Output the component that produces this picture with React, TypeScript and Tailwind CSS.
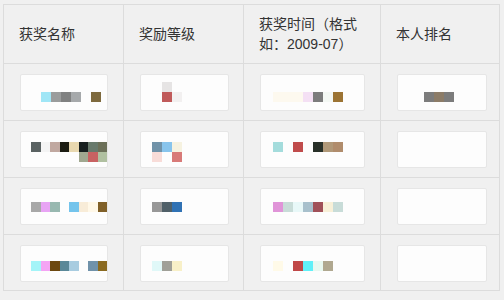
import React from 'react';

type Mosaic = { pl: string; pt: string; rows: string[][] } | null;

const COLS = ['w-[120px]', 'w-[120px]', 'w-[137px]', 'w-[119px]'];
const INPUT_W = ['w-[88px]', 'w-[89px]', 'w-[105px]', 'w-[90px]'];
const ROW_H = ['h-[57px]', 'h-[57px]', 'h-[57px]', 'h-[56px]'];

const HEADERS = ['获奖名称', '奖励等级', '获奖时间（格式如：2009-07）', '本人排名'];

// garbled (mosaic) values shown in the inputs, one block = 10px
const ROWS: Mosaic[][] = [
  [
    { pl: 'pl-[20px]', pt: 'pt-[17px]', rows: [['#a0e6f6', '#9a9c9c', '#808181', '#a6a9ab', '', '#7e6a3e']] },
    { pl: 'pl-[21px]', pt: 'pt-[7px]', rows: [['#e6e4e4'], ['#c05a5a', '#f2f0f0']] },
    { pl: 'pl-[12px]', pt: 'pt-[17px]', rows: [['#fdf9ef', '#fdf9ef', '#fdf9ef', '#f4e0f4', '#7c7c7c', '#f4f8f4', '#9c7434']] },
    { pl: 'pl-[26px]', pt: 'pt-[17px]', rows: [['#7c7c7c', '#8c7c68', '#7c7c7c']] },
  ],
  [
    {
      pl: 'pl-[10px]',
      pt: 'pt-[10px]',
      rows: [
        ['#5a6262', '#f4f4f4', '#c0a8a0', '#1c1c12', '#e8d8b0', '#182020', '#687a6c', '#6c7058'],
        ['', '', '', '', '', '#a0a890', '#c86262', '#b0c0a0'],
      ],
    },
    { pl: 'pl-[11px]', pt: 'pt-[10px]', rows: [['#7092a8', '#88c4ec', '#f6f2e0'], ['#f8dcd8', '', '#d87a78']] },
    { pl: 'pl-[12px]', pt: 'pt-[10px]', rows: [['#a4dcdc', '', '#c04c4c', '', '#283028', '#b09878', '#b08c6c']] },
    null,
  ],
  [
    { pl: 'pl-[10px]', pt: 'pt-[13px]', rows: [['#a8a8a8', '#e8a4f4', '#98b8b0', '', '#74c4ec', '#f8ecd8', '#fff8e8', '#806028']] },
    { pl: 'pl-[11px]', pt: 'pt-[13px]', rows: [['#989898', '#506068', '#3072b4']] },
    { pl: 'pl-[12px]', pt: 'pt-[13px]', rows: [['#e094d8', '#c8dcd8', '#e8f8f8', '#a8c0cc', '#a05058', '#f8f0d8', '#c8dcd8']] },
    null,
  ],
  [
    { pl: 'pl-[10px]', pt: 'pt-[15px]', rows: [['#a4f4f8', '#f4a4f4', '#6c4810', '#5a8898', '#a8cce0', '', '#7092aa', '#8a6a20']] },
    { pl: 'pl-[11px]', pt: 'pt-[15px]', rows: [['#e0f8f8', '#a0a098', '#f8f0c8']] },
    { pl: 'pl-[12px]', pt: 'pt-[15px]', rows: [['#fffae8', '', '#c04848', '#60f0f8', '#e8f8f0', '#b0a890']] },
    null,
  ],
];

const Field = ({ mosaic, width }: { mosaic: Mosaic; width: string }) => (
  <div className={`h-[37px] ${width} bg-[#fdfdfd] border border-[#e6e6e6] rounded-[2px] ${mosaic ? `${mosaic.pl} ${mosaic.pt}` : ''}`}>
    {mosaic?.rows.map((row, i) => (
      <div key={i} className="flex">
        {row.map((c, j) => (
          <span key={j} className="w-[10px] h-[10px]" style={{ backgroundColor: c || 'transparent' }} />
        ))}
      </div>
    ))}
  </div>
);

export default function App() {
  return (
    <div
      className="w-[504px] h-[300px] bg-[#f0f0f0] pt-[4px] pl-[3px] text-[#333] text-[14px]"
      style={{ fontFamily: '"Liberation Sans", "Noto Sans CJK SC", sans-serif' }}
    >
      <div className="inline-block border-l border-t border-[#dcdcdc]">
        {/* Header */}
        <div className="flex">
          {HEADERS.map((h, i) => (
            <div key={h} className={`${COLS[i]} h-[59px] flex items-center pl-[15px] pr-[15px] leading-[20px] border-r border-b border-[#dcdcdc]`}>
              {h}
            </div>
          ))}
        </div>

        {/* Rows */}
        {ROWS.map((row, r) => (
          <div key={r} className="flex">
            {row.map((m, i) => (
              <div key={i} className={`${COLS[i]} ${ROW_H[r]} pl-[16px] pt-[10px] border-r border-b border-[#dcdcdc]`}>
                <Field mosaic={m} width={INPUT_W[i]} />
              </div>
            ))}
          </div>
        ))}
      </div>
    </div>
  );
}
